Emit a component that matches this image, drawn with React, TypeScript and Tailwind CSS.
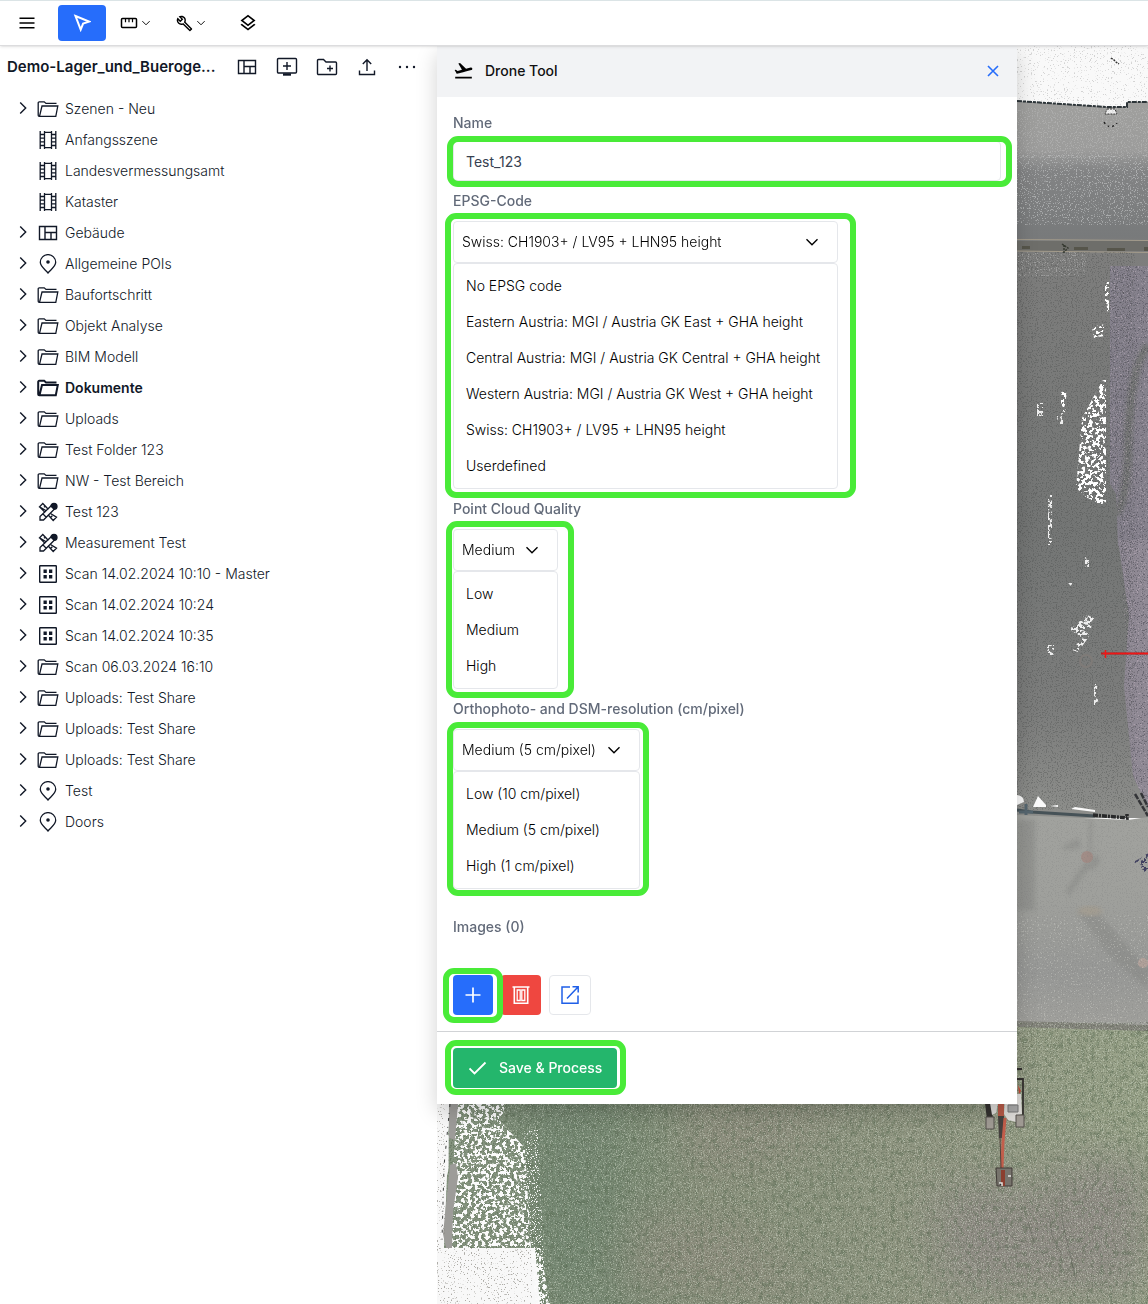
import { useState } from "react";
import type { ReactNode } from "react";
import { MdFlightTakeoff, MdOutlineBuild, MdOutlineLayers } from "react-icons/md";

type IconProps = { className?: string };

function Chevron({ className = "" }: IconProps) {
  return (
    <svg viewBox="0 0 12 12" fill="none" stroke="currentColor" strokeWidth="1.4" className={className} aria-hidden="true">
      <path d="M0.5 3.2 6 8.7l5.500-5.500" />
    </svg>
  );
}

function MenuIcon() {
  return (
    <svg viewBox="0 0 16 12" className="h-3 w-4" stroke="currentColor" strokeWidth="1.6" aria-hidden="true">
      <path d="M0.5 1.2h15M0.5 6h15M0.5 10.8h15" />
    </svg>
  );
}

function CursorIcon() {
  return (
    <svg viewBox="0 0 18 18" className="size-[18px]" fill="none" stroke="currentColor" strokeWidth="2" aria-hidden="true">
      <path d="M2.500 2l13.600 5.600-6 2L7.700 15.600z" />
    </svg>
  );
}

function RulerIcon() {
  return (
    <svg viewBox="0 0 18 12" className="h-3 w-[18px] shrink-0" fill="none" stroke="currentColor" strokeWidth="1.5" aria-hidden="true">
      <rect x="1.5" y="1.500" width="15" height="9" rx="1" />
      <path d="M5.500 1.500v3.700M9 1.500v3.700M12.500 1.500v3.700" strokeWidth="1.200" />
    </svg>
  );
}

function LayoutIcon() {
  return (
    <svg viewBox="0 0 20 16" className="h-4 w-5" fill="none" stroke="currentColor" strokeWidth="1.4" aria-hidden="true">
      <path d="M1.5 1.5h17v13h-17zM7 1.5v13M7 7.500h11.500M13 7.500v7" />
    </svg>
  );
}

function ScreenAddIcon() {
  return (
    <svg viewBox="0 0 22 20" className="h-5 w-[22px]" fill="none" stroke="currentColor" strokeWidth="1.4" aria-hidden="true">
      <rect x="1.500" y="1.500" width="19" height="14.500" rx="1" />
      <path d="M11 5v8M7 9h8" />
      <path d="M7 17.500h8" strokeWidth="2.400" />
    </svg>
  );
}

function FolderAddIcon() {
  return (
    <svg viewBox="0 0 22 18" className="h-[18px] w-[22px]" fill="none" stroke="currentColor" strokeWidth="1.4" aria-hidden="true">
      <path d="M1.500 15.500v-13a1 1 0 0 1 1-1h5l2.500 2.500h9.500a1 1 0 0 1 1 1v10.500a1 1 0 0 1-1 1h-17a1 1 0 0 1-1-1z" />
      <path d="M14 7.500v6M11 10.500h6" />
    </svg>
  );
}

function UploadIcon() {
  return (
    <svg viewBox="0 0 18 18" className="size-[18px]" fill="none" stroke="currentColor" strokeWidth="1.4" aria-hidden="true">
      <path d="M9 13V2M4.800 6 9 1.800 13.200 6M1.500 12.500v4h15v-4" />
    </svg>
  );
}

function DotsIcon() {
  return (
    <svg viewBox="0 0 18 4" className="h-1 w-[18px]" fill="currentColor" aria-hidden="true">
      <circle cx="2" cy="2" r="1.200" />
      <circle cx="9" cy="2" r="1.200" />
      <circle cx="16" cy="2" r="1.200" />
    </svg>
  );
}

function FolderIcon({ bold }: { bold?: boolean }) {
  return (
    <svg viewBox="0 0 22 18" className="h-[18px] w-[22px]" fill="none" stroke="currentColor" strokeWidth={bold ? 2 : 1.3} aria-hidden="true">
      <path d="M2.500 16.300 5 6h15.800l-2 10.300H2.200a1 1 0 0 1-1-1V2.800a1 1 0 0 1 1-1h5L9 3.400h10.500" />
    </svg>
  );
}

function FilmIcon() {
  return (
    <svg viewBox="0 0 18 18" className="size-[18px]" fill="none" stroke="currentColor" strokeWidth="1.300" aria-hidden="true">
      <path d="M1.200 0v18M5.500 0v18M12.500 0v18M16.800 0v18M5.500 1.300h7M5.500 16.700h7M1.200 3.500h4.300M1.200 7.200h4.300M1.200 10.800h4.300M1.200 14.500h4.300M12.500 3.500h4.300M12.500 7.200h4.300M12.500 10.800h4.300M12.500 14.500h4.300" />
    </svg>
  );
}

function PinIcon() {
  return (
    <svg viewBox="0 0 18 20" className="h-5 w-[18px]" fill="none" stroke="currentColor" strokeWidth="1.300" aria-hidden="true">
      <path d="M9 19C6 15.500 1.300 12.300 1.300 8.300a7.700 7.700 0 0 1 15.400 0C16.700 12.300 12 15.500 9 19z" />
      <circle cx="9" cy="8" r="1.800" fill="currentColor" stroke="none" />
    </svg>
  );
}

function ToolsIcon() {
  return (
    <svg viewBox="0 0 20 20" className="size-5" fill="none" stroke="currentColor" strokeWidth="1.300" aria-hidden="true">
      <path d="M8.200 8.800 1.500 4.800 4.800 1.500l4.700 5M11.500 8l0 0M12.500 11.500l6 3.700-3.300 3.300-5-5.500M4.800 1.500 8.600 5.500 10 7.500M1.500 4.800l5.500 5.600M6 5.200l1.500-1.500M12.800 15.300l1.500-1.500" />
      <path d="M2 18v-3.500L13.500 3.500 17 6.500 5.500 18zM5 12l3 3" />
      <path d="M13 4.200a3 3 0 1 1 3.200 3.100z" fill="currentColor" />
    </svg>
  );
}

function ScanIcon() {
  return (
    <svg viewBox="0 0 18 18" className="size-[18px]" aria-hidden="true">
      <rect x="0.700" y="0.700" width="16.600" height="16.600" rx="0.500" fill="none" stroke="currentColor" strokeWidth="1.400" />
      <path d="M4.500 4.500h3.300v3.500H4.500zM10 4.500h3.300v3.500H10zM4.500 10h3.300v3.500H4.500zM10 10h3.300v3.500H10z" fill="currentColor" />
    </svg>
  );
}

function TrashIcon() {
  return (
    <svg viewBox="0 0 18 20" className="h-5 w-[18px]" fill="none" stroke="currentColor" strokeWidth="1.600" aria-hidden="true">
      <path d="M0.500 2h17M2.300 2.500v15.700h13.400V2.500" />
      <path d="M5.200 5h3v10.500h-3zM9.800 5h3v10.500h-3z" strokeWidth="1.300" />
    </svg>
  );
}

function OpenIcon() {
  return (
    <svg viewBox="0 0 20 20" className="size-5" fill="none" stroke="currentColor" strokeWidth="1.500" aria-hidden="true">
      <path d="M10 2H2v16.200h16V10.500M7 13.500 17.500 2.500M12.500 1.800h5.700V7.500" />
    </svg>
  );
}

type Kind = "folder" | "film" | "layout" | "pin" | "tools" | "scan";

const TREE: { label: string; kind: Kind; leaf?: boolean; bold?: boolean }[] = [
  { label: "Szenen - Neu", kind: "folder" },
  { label: "Anfangsszene", kind: "film", leaf: true },
  { label: "Landesvermessungsamt", kind: "film", leaf: true },
  { label: "Kataster", kind: "film", leaf: true },
  { label: "Gebäude", kind: "layout" },
  { label: "Allgemeine POIs", kind: "pin" },
  { label: "Baufortschritt", kind: "folder" },
  { label: "Objekt Analyse", kind: "folder" },
  { label: "BIM Modell", kind: "folder" },
  { label: "Dokumente", kind: "folder", bold: true },
  { label: "Uploads", kind: "folder" },
  { label: "Test Folder 123", kind: "folder" },
  { label: "NW - Test Bereich", kind: "folder" },
  { label: "Test 123", kind: "tools" },
  { label: "Measurement Test", kind: "tools" },
  { label: "Scan 14.02.2024 10:10 - Master", kind: "scan" },
  { label: "Scan 14.02.2024 10:24", kind: "scan" },
  { label: "Scan 14.02.2024 10:35", kind: "scan" },
  { label: "Scan 06.03.2024 16:10", kind: "folder" },
  { label: "Uploads: Test Share", kind: "folder" },
  { label: "Uploads: Test Share", kind: "folder" },
  { label: "Uploads: Test Share", kind: "folder" },
  { label: "Test", kind: "pin" },
  { label: "Doors", kind: "pin" },
];

function KindIcon({ kind, bold }: { kind: Kind; bold?: boolean }) {
  if (kind === "folder") return <FolderIcon bold={bold} />;
  if (kind === "film") return <FilmIcon />;
  if (kind === "layout") return <LayoutIcon />;
  if (kind === "pin") return <PinIcon />;
  if (kind === "scan") return <ScanIcon />;
  return <ToolsIcon />;
}

function Toolbar() {
  return (
    <header className="relative z-20 flex h-[46px] shrink-0 items-center border-t border-b border-t-[#dbe4e6] border-b-[#dcdcde] bg-white pl-2 text-black shadow-sm">
      <button aria-label="Menu" className="flex h-9 w-[38px] items-center justify-center"><MenuIcon /></button>
      <button aria-label="Select" className="ml-3 flex h-9 w-12 items-center justify-center rounded bg-[#266dfb] text-white"><CursorIcon /></button>
      <button aria-label="Measure" className="ml-3 flex h-9 w-9 items-center gap-1 pl-0.5"><RulerIcon /><Chevron className="size-2 shrink-0" /></button>
      <button aria-label="Tools" className="ml-5 flex h-9 w-9 items-center gap-1 pl-0.5"><MdOutlineBuild className="size-[17px] shrink-0" /><Chevron className="size-2 shrink-0" /></button>
      <button aria-label="Layers" className="ml-5 flex h-9 w-9 items-center justify-center"><MdOutlineLayers className="size-5" /></button>
    </header>
  );
}

function Sidebar() {
  const actions: [string, ReactNode][] = [
    ["Layout", <LayoutIcon key="l" />],
    ["Add scene", <ScreenAddIcon key="s" />],
    ["Add folder", <FolderAddIcon key="f" />],
    ["Upload", <UploadIcon key="u" />],
    ["More", <DotsIcon key="d" />],
  ];
  return (
    <aside className="w-[437px] shrink-0 bg-white text-[#111827]">
      <div className="flex h-[42px] items-center pr-[10px] pl-[7px]">
        <h1 className="min-w-0 flex-1 truncate text-[15px] font-semibold text-[#111827]">Demo-Lager_und_Bueroge...</h1>
        {actions.map(([label, icon]) => (
          <button key={label} aria-label={label} className="flex h-8 w-10 items-center justify-center">{icon}</button>
        ))}
      </div>
      <ul className="mt-[5px]">
        {TREE.map((item, i) => (
          <li key={i} className="flex h-[31px] items-center pl-[13px]">
            {item.leaf ? (
              <span className="w-5" />
            ) : (
              <button aria-label={`Expand ${item.label}`} className="flex w-5 justify-center pb-0.5">
                <Chevron className="size-3 -rotate-90" />
              </button>
            )}
            <span className="ml-1 flex w-[22px] justify-center"><KindIcon kind={item.kind} bold={item.bold} /></span>
            <span className={item.bold ? "ml-1.5 text-sm font-semibold" : "ml-1.5 text-sm font-light text-[#111827]"}>{item.label}</span>
          </li>
        ))}
      </ul>
    </aside>
  );
}

// Green callout frame laid over a control.
function Frame({ className }: { className: string }) {
  return <span aria-hidden="true" className={`pointer-events-none absolute z-10 rounded-[11px] border-6 border-[#49eb38] ${className}`} />;
}

function Dropdown({ id, label, initial, options, width, frame }: { id: string; label: string; initial: string; options: string[]; width: string; frame: string }) {
  const [value, setValue] = useState(initial);
  return (
    <div className="mt-[10px]">
      <label htmlFor={id} className="block text-sm leading-5 font-medium text-[#626a79]">{label}</label>
      <div className={`relative mt-[10px] max-w-full ${width}`}>
        <div className="relative">
          <select id={id} value={value} onChange={(e) => setValue(e.target.value)} className="h-[42px] w-full appearance-none rounded border border-[#e5e7eb] bg-white pl-2 text-sm font-light text-black">
            {options.map((o) => <option key={o}>{o}</option>)}
          </select>
          <Chevron className="pointer-events-none absolute top-[15px] right-5 size-3 text-black" />
        </div>
        <ul className="rounded border border-[#e5e7eb] bg-white py-1">
          {options.map((o) => (
            <li key={o}>
              <button onClick={() => setValue(o)} className="h-9 w-full pl-3 text-left text-sm font-light whitespace-nowrap text-black">{o}</button>
            </li>
          ))}
        </ul>
        <Frame className={frame} />
      </div>
    </div>
  );
}

function DronePanel() {
  const [name, setName] = useState("Test_123");
  return (
    <section className="relative z-10 w-[580px] max-w-full bg-white shadow-[0_8px_20px_rgba(0,0,0,0.18)]">
      <div className="flex h-[51px] items-center bg-[#f2f3f5] px-4 pb-0.5">
        <MdFlightTakeoff className="size-[21px] text-black" />
        <h2 className="ml-[11px] flex-1 text-sm font-medium text-[#111]">Drone Tool</h2>
        <button aria-label="Close" className="flex size-4 items-center justify-center text-[#266dfb]">
          <svg viewBox="0 0 12 12" className="size-3" stroke="currentColor" strokeWidth="1.600" aria-hidden="true"><path d="M1 1l10 10M11 1 1 11" /></svg>
        </button>
      </div>
      <div className="px-4 pt-4 pb-4">
        <label htmlFor="name" className="block text-sm leading-5 font-medium text-[#626a79]">Name</label>
        <div className="relative mt-2">
          <input id="name" value={name} onChange={(e) => setName(e.target.value)} className="block h-10 w-full rounded border border-[#e5e7eb] bg-white px-3 text-sm text-[#374151]" />
          <Frame className="-top-[5px] -right-[11px] -bottom-[6px] -left-[6px]" />
        </div>
        <Dropdown
          id="epsg"
          label="EPSG-Code"
          initial="Swiss: CH1903+ / LV95 + LHN95 height"
          width="w-[385px]"
          frame="-top-2 -right-[18px] -bottom-[9px] -left-2"
          options={[
            "No EPSG code",
            "Eastern Austria: MGI / Austria GK East + GHA height",
            "Central Austria: MGI / Austria GK Central + GHA height",
            "Western Austria: MGI / Austria GK West + GHA height",
            "Swiss: CH1903+ / LV95 + LHN95 height",
            "Userdefined",
          ]}
        />
        <Dropdown id="quality" label="Point Cloud Quality" initial="Medium" width="w-[105px]" frame="-top-2 -right-4 -bottom-[9px] -left-[7px]" options={["Low", "Medium", "High"]} />
        <Dropdown
          id="resolution"
          label="Orthophoto- and DSM-resolution (cm/pixel)"
          initial="Medium (5 cm/pixel)"
          width="w-[187px]"
          frame="-top-[7px] -right-[9px] -bottom-[7px] -left-[6px]"
          options={["Low (10 cm/pixel)", "Medium (5 cm/pixel)", "High (1 cm/pixel)"]}
        />
        <h3 className="mt-7 text-sm leading-5 font-medium text-[#626a79]">Images (0)</h3>
        <div className="mt-[38px] flex gap-2">
          <div className="relative">
            <button aria-label="Add images" className="flex size-10 items-center justify-center rounded bg-[#266dfb] text-white">
              <svg viewBox="0 0 16 16" className="size-4" stroke="currentColor" strokeWidth="1.700" aria-hidden="true"><path d="M8 0.500v15M0.500 8h15" /></svg>
            </button>
            <Frame className="-top-[7px] -right-[10px] -bottom-2 -left-[10px]" />
          </div>
          <button aria-label="Delete images" className="flex size-10 items-center justify-center rounded bg-[#ef4740] text-white"><TrashIcon /></button>
          <button aria-label="Open images" className="flex h-10 w-[42px] items-center justify-center rounded border border-[#e5e7eb] bg-white text-[#1f5fe8]"><OpenIcon /></button>
        </div>
      </div>
      <div className="border-t border-[#d1d3d6] p-4">
        <div className="relative w-fit">
          <button className="flex h-10 w-[164px] items-center rounded bg-[#24b66c] pl-4 text-sm font-medium text-white">
            <svg viewBox="0 0 18 14" className="mr-3 h-[14px] w-[18px]" fill="none" stroke="currentColor" strokeWidth="1.800" aria-hidden="true"><path d="M0.500 7.500 5.500 12.500 16.500 1.500" /></svg>
            <span>Save &amp; Process</span>
          </button>
          <Frame className="-top-2 -right-[9px] -bottom-[7px] -left-2" />
        </div>
      </div>
    </section>
  );
}

// Aerial point-cloud view: paved yard on top, grass below, grain from turbulence filters.
function PointCloud() {
  return (
    <svg viewBox="437 46 711 1258" preserveAspectRatio="xMinYMin slice" className="absolute inset-0 h-full w-full" aria-hidden="true">
      <defs>
        <linearGradient id="yard" gradientUnits="userSpaceOnUse" x1="0" y1="100" x2="0" y2="815">
          <stop offset="0" stopColor="#9f9f9d" />
          <stop offset="0.07" stopColor="#9c9c9b" />
          <stop offset="0.1" stopColor="#828384" />
          <stop offset="0.19" stopColor="#787a7b" />
          <stop offset="0.21" stopColor="#7e7e7d" />
          <stop offset="0.6" stopColor="#747675" />
          <stop offset="0.85" stopColor="#7c7d7c" />
          <stop offset="1" stopColor="#8d8e8b" />
        </linearGradient>
        <linearGradient id="road" gradientUnits="userSpaceOnUse" x1="0" y1="815" x2="0" y2="1025">
          <stop offset="0" stopColor="#a1a29e" />
          <stop offset="0.4" stopColor="#9fa09c" />
          <stop offset="0.75" stopColor="#979896" />
          <stop offset="1" stopColor="#a0a09c" />
        </linearGradient>
        <linearGradient id="grass" gradientUnits="userSpaceOnUse" x1="437" y1="0" x2="1148" y2="0">
          <stop offset="0.1" stopColor="#82917c" />
          <stop offset="0.24" stopColor="#7b8c76" />
          <stop offset="0.38" stopColor="#89927c" />
          <stop offset="0.7" stopColor="#929783" />
          <stop offset="1" stopColor="#98a288" />
        </linearGradient>
        <filter id="fine" x="0" y="0" width="1" height="1" colorInterpolationFilters="sRGB">
          <feTurbulence type="fractalNoise" baseFrequency="0.85" numOctaves="2" seed="3" />
          <feColorMatrix values="0 0 0 0 0 0 0 0 0 0 0 0 0 0 0 9 0 0 0 -5.200" />
          <feComposite in="SourceGraphic" operator="in" />
        </filter>
        <filter id="sparse" x="0" y="0" width="1" height="1" colorInterpolationFilters="sRGB">
          <feTurbulence type="fractalNoise" baseFrequency="0.700" numOctaves="2" seed="8" />
          <feColorMatrix values="0 0 0 0 0 0 0 0 0 0 0 0 0 0 0 0 12 0 0 -7.600" />
          <feComposite in="SourceGraphic" operator="in" />
        </filter>
        <filter id="grain" x="0" y="0" width="1" height="1" colorInterpolationFilters="sRGB">
          <feTurbulence type="fractalNoise" baseFrequency="0.800" numOctaves="2" seed="21" />
          <feColorMatrix values="0 0 0 0 0 0 0 0 0 0 0 0 0 0 0 0 0 8 0 -4.300" />
          <feComposite in="SourceGraphic" operator="in" />
        </filter>
        <filter id="patch" x="0" y="0" width="1" height="1" colorInterpolationFilters="sRGB">
          <feTurbulence type="fractalNoise" baseFrequency="0.280" numOctaves="4" seed="12" />
          <feColorMatrix values="0 0 0 0 0 0 0 0 0 0 0 0 0 0 0 16 0 0 0 -8" />
          <feComposite in="SourceGraphic" operator="in" />
        </filter>
        <filter id="blots" x="0" y="0" width="1" height="1" colorInterpolationFilters="sRGB">
          <feTurbulence type="fractalNoise" baseFrequency="0.220 0.160" numOctaves="4" seed="5" />
          <feColorMatrix values="0 0 0 0 0 0 0 0 0 0 0 0 0 0 0 0 0 5 0 -2.600" />
          <feComposite in="SourceGraphic" operator="in" />
        </filter>
        <filter id="soft" x="-0.3" y="-0.3" width="1.6" height="1.6"><feGaussianBlur stdDeviation="22" /></filter>
        <filter id="haze"><feGaussianBlur stdDeviation="2" /></filter>
      </defs>

      <rect x="437" y="46" width="711" height="1258" fill="#f9f9f9" />
      <rect x="437" y="46" width="711" height="60" fill="#c4c4c4" opacity="0.700" filter="url(#sparse)" />
      <path d="M1111 58l3 2 2 2 3 2" stroke="#333" strokeWidth="1.500" strokeDasharray="2 1" fill="none" />

      <path d="M437 101h580l90 6h20v-5h21v716H437z" fill="url(#yard)" />
      <path d="M1017 101l90 6h20v-5h21" fill="none" stroke="#2d3539" strokeWidth="2" strokeDasharray="5 1 3 1" />
      <path d="M1107 109h8l2 5h-12z" fill="#eee" stroke="#333" strokeDasharray="2 1" />
      <path d="M1104 122q6 9 13 1" fill="none" stroke="#222" strokeWidth="1.500" strokeDasharray="2 3" />
      <rect x="1017" y="108" width="131" height="50" fill="#c5c5c5" opacity="0.400" filter="url(#grain)" />
      <rect x="1017" y="155" width="131" height="70" fill="#c6c8c9" opacity="0.600" filter="url(#fine)" />
      <rect x="1017" y="252" width="70" height="24" fill="#b5b5b5" opacity="0.600" filter="url(#fine)" />
      <path d="M1017 241h131v10h-131z" fill="#6e6e6a" />
      <path d="M1017 239.500l131 1M1017 251l131 1.500" stroke="#a39b8b" strokeWidth="1" />
      <path d="M1022 246h8v3h-8zM1074 247h14v3h-14zM1107 248h18v3h-18zM1144 247h4v4h-4z" fill="#4b4a3f" opacity="0.700" />
      <path d="M1062 244l6 4-5 5M1064 245v8" stroke="#363a31" strokeWidth="1.500" strokeDasharray="2 1" fill="none" />

      <path d="M1110 266h38v280h-30l-2-52-6-10z" fill="#85818c" />
      <path d="M1118 540h30v268l-15-32-9-90 5-70z" fill="#8f8994" />
      <path d="M1148 345q-18 22-20 100 0 50-12 70" fill="none" stroke="#747675" strokeWidth="8" filter="url(#haze)" />
      <path d="M1110 266h38v542l-15-32-14-258-9-60z" fill="#4d4c56" opacity="0.550" filter="url(#fine)" />
      <path d="M1110 266h38v542l-15-32-14-258-9-60z" fill="#c9b9c6" opacity="0.450" filter="url(#sparse)" />
      <rect x="1017" y="252" width="118" height="558" fill="#414443" opacity="0.300" filter="url(#grain)" />
      <path d="M1100 385l6-10v127l-6 3-12-7-12-10 6-70z" fill="#fff" filter="url(#patch)" />
      <path d="M1104 410v92l-10-1 3-60zM1061 392l5-2 1 20-6 5zM1078 482l8-6 14 4v18h-14zM1092 327l12-3v12l-10 2zM1105 282h4v30l-4-2z" fill="#fff" filter="url(#patch)" />
      <path d="M1057 416h6v8h-6M1037 403h6v13h-6M1085 614l9 4-6 20-10 14-6-2 10-12-14-10 8-2zM1047 645h7v10h-7zM1094 682h5v24h-5zM1068 583h4v4M1087 546l4-3M1085 557h4v10h-4zM1048 495h4v50h-4z" fill="#eee" filter="url(#patch)" />

      <path d="M1101 653.500h47" stroke="#b22222" strokeWidth="2" />
      <path d="M1105.500 650v8M1103 653.500h45" fill="none" stroke="#f01616" strokeWidth="1.500" />

      <path d="M437 815h580l111 5 20-3v210H437z" fill="url(#road)" />
      <path d="M1017 795q7 1 7 7l-7 3zM1033 807l5-11 8 9v2zM1050 806l8-1v2M1075 807l20 3v2l-24-3z" fill="#fafafa" />
      <path d="M1017 810l14 2 64 4" stroke="#465257" strokeWidth="3" fill="none" />
      <path d="M1026 804v11M1019 812h14" stroke="#56666f" strokeWidth="3" />
      <path d="M1093 815l34 3v-4" stroke="#28292a" strokeWidth="3.500" strokeDasharray="5 1 2 1" fill="none" />
      <path d="M1135 794l13 22M1141 793l7 14" stroke="#343538" strokeWidth="2.500" strokeDasharray="6 1" />
      <path d="M1133 862l8-4 7-5v22l-8-3 2-7z" fill="#404060" filter="url(#patch)" />
      <g fill="#878885" opacity="0.500" filter="url(#haze)">
        <path d="M1089 819h3v40h-3zM1077 911l18-2 53 60v20l-40-34zM1066 890l20-30 5 4-22 33zM1063 846l16-8 2 10-18 2zM1090 860l8-6 2 10-12 8zM1017 820h18v90h-18z" />
      </g>
      <ellipse cx="1090" cy="911" rx="12" ry="5" fill="#a39d92" filter="url(#haze)" />
      <circle cx="1087" cy="857" r="6" fill="#a3857e" opacity="0.700" />
      <circle cx="1143" cy="963" r="5" fill="#b0a099" />
      <circle cx="1086" cy="661" r="6" fill="none" stroke="#7f7b78" strokeWidth="2" />
      <rect x="1017" y="820" width="131" height="205" fill="#777" opacity="0.180" filter="url(#grain)" />
      <rect x="1017" y="915" width="131" height="108" fill="#d0d0ca" opacity="0.400" filter="url(#sparse)" />

      <path d="M437 1022h580l131 5v277H437z" fill="url(#grass)" />
      <path d="M1017 1021l131 4v6l-131-4z" fill="#84847c" />
      <g filter="url(#soft)">
        <path d="M930 1200l50-20 60 10 30-30h78v134H950z" fill="#918d86" />
        <path d="M640 1210l100 10 80 74H620z" fill="#918d80" opacity="0.700" />
        <path d="M680 1100h170l-60 60-100 20z" fill="#918d80" opacity="0.700" />
        <path d="M520 1104h80v180l-60 10z" fill="#72856f" opacity="0.600" />
      </g>
      <path d="M437 1030h711v274H437z" fill="#55684e" opacity="0.350" filter="url(#blots)" />
      <path d="M437 1022h711v282H437z" fill="#4d5a47" opacity="0.350" filter="url(#grain)" />
      <path d="M437 1022h711v282H437z" fill="#d0d8c8" opacity="0.450" filter="url(#fine)" />
      <path d="M437 1104h16l-5 30 6 12-7 30-3 72h91l5 56H437z" fill="#f8f8f8" />
      <path d="M449 1104h56l-4 18 22 26 2 100h-77z" fill="#84937e" />
      <path d="M449 1104h56l-4 18 22 26 2 100h-77z" fill="#566650" opacity="0.500" filter="url(#grain)" />
      <path d="M457 1104h48l-4 18 24 26 6 100h-83z" fill="#fbfbfb" filter="url(#patch)" />
      <path d="M524 1130h14l8 174h-10l-6-60z" fill="#fbfbfb" filter="url(#fine)" />
      <path d="M530 1248h10l10 56h-14z" fill="#fbfbfb" filter="url(#patch)" />
      <path d="M449 1104h9l-3 36-6-2zM450 1165l6-2 2 14-5 35-1 36h-6l-3-14z" fill="#9d9c99" />
      <path d="M450 1104l-3 32-3 30-2 74" stroke="#3b3d3c" strokeWidth="1" strokeDasharray="3 6 1 4" fill="none" />
      <path d="M437 1104h8v144h87v56h-95z" fill="#8f8d86" opacity="0.700" filter="url(#sparse)" />
      <path d="M1049 1215l3 20 10 20M1062 1190v30l14 60M1005 1230l10 10 9 2M1028 1222l6 20 10 12" stroke="#565b50" strokeWidth="1" fill="none" opacity="0.400" />

      <path d="M1015 1069h7M1017 1079h6v45" stroke="#34312f" strokeWidth="1.800" fill="none" />
      <path d="M985 1103h6l2 16-6 1z" fill="#33312f" />
      <path d="M990 1103h8l-2 10-4 2zM1005 1094h16l1 20-6 2v6l-8-2-4-6z" fill="#dedcd9" />
      <path d="M1008 1105h10v7h-10z" fill="#a8a8a8" stroke="#777" />
      <path d="M1018 1085l3 6-2 3z" fill="#c34a36" />
      <path d="M986 1117h8v12h-8zM1016 1115h8v12h-8z" fill="#a09b94" stroke="#55514c" />
      <path d="M998 1103h6v14h-6z" fill="#b65947" />
      <path d="M998 1116h6l-1 22h-4z" fill="#46413f" />
      <path d="M1005 1118l-2 24-1 26" stroke="#c35e4b" strokeWidth="3" fill="none" />
      <path d="M1000 1138l1 30" stroke="#54403a" strokeWidth="1" />
      <path d="M996 1168h16v18h-15z" fill="#77736c" stroke="#403b37" />
      <path d="M1003 1170v16" stroke="#8b3e2f" strokeWidth="4" />
      <path d="M999 1183h3v3M1008 1176h3" stroke="#e8e6e4" strokeWidth="1.500" />
    </svg>
  );
}

export default function App() {
  return (
    <div className="flex min-h-screen flex-col bg-white font-['Inter','Liberation_Sans',sans-serif]">
      <Toolbar />
      <div className="flex flex-1">
        <Sidebar />
        <main className="relative min-w-0 flex-1">
          <PointCloud />
          <DronePanel />
        </main>
      </div>
    </div>
  );
}
